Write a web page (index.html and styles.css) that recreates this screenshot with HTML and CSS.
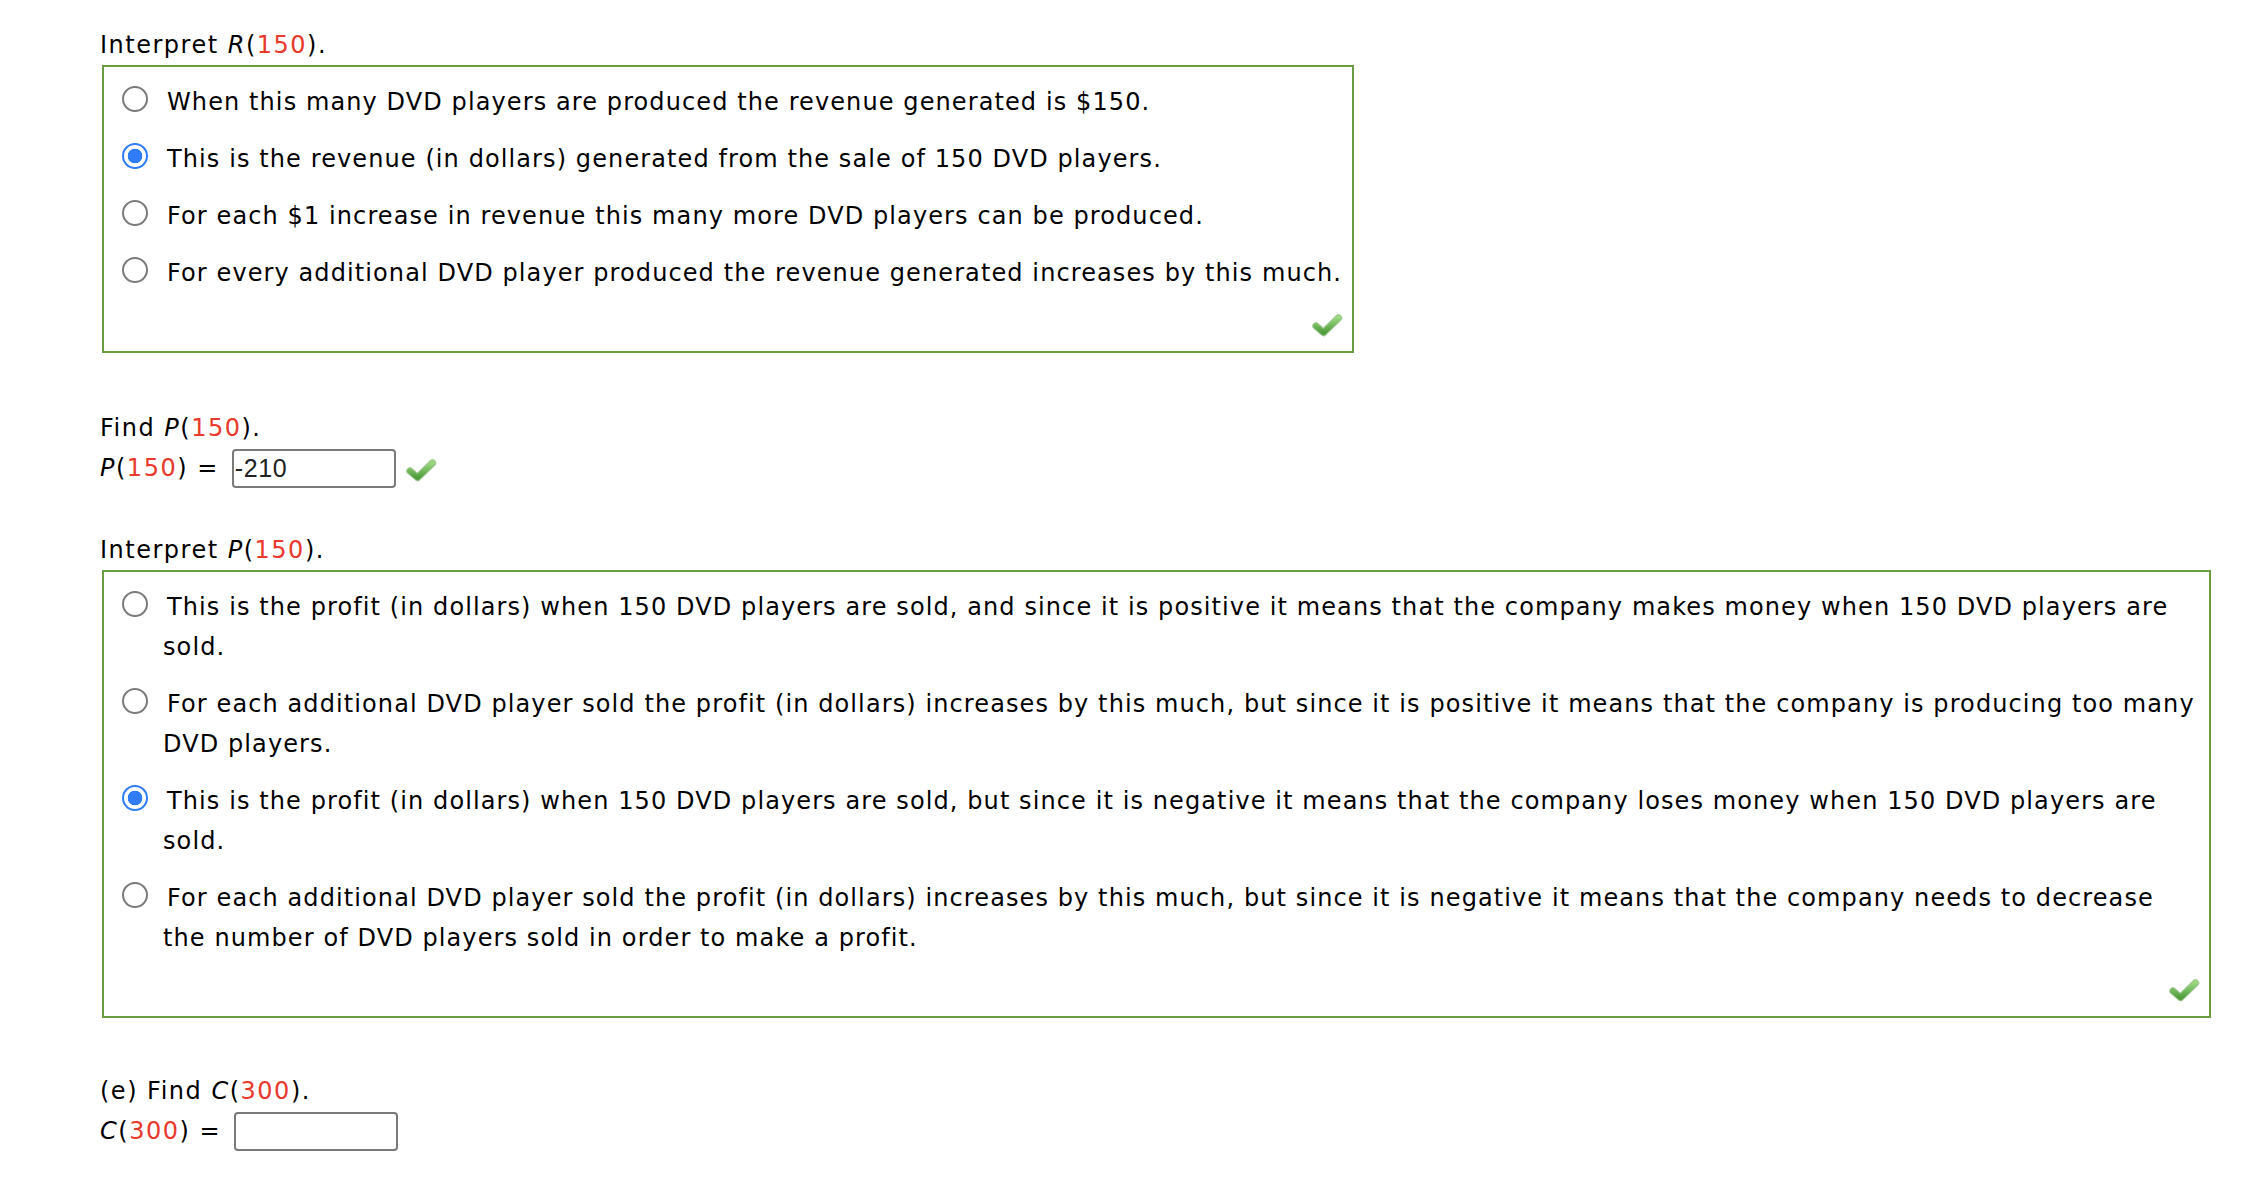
FILE: index.html
```html
<!DOCTYPE html>
<html lang="en">
<head>
<meta charset="utf-8">
<title>Interpret R(150)</title>
<link rel="stylesheet" href="styles.css">
</head>
<body>
<svg width="0" height="0" class="defs" aria-hidden="true">
  <defs>
    <linearGradient id="chk" x1="0" y1="0" x2="0" y2="1">
      <stop offset="0" stop-color="#9ad67f"/>
      <stop offset="1" stop-color="#4f9d3c"/>
    </linearGradient>
  </defs>
</svg>
<div class="page">
  <p class="prompt">Interpret <i>R</i>(<span class="red">150</span>).</p>
  <div class="choices box-r">
    <div class="choice"><span class="radio"></span><span class="text">When this many DVD players are produced the revenue generated is $150.</span></div>
    <div class="choice"><span class="radio checked"></span><span class="text">This is the revenue (in dollars) generated from the sale of 150 DVD players.</span></div>
    <div class="choice"><span class="radio"></span><span class="text">For each $1 increase in revenue this many more DVD players can be produced.</span></div>
    <div class="choice"><span class="radio"></span><span class="text">For every additional DVD player produced the revenue generated increases by this much.</span></div>
    <div class="mark-row">
      <svg class="check" viewBox="0 0 32 24"><path class="check-edge" d="M5 13 L12.5 19.5 L27.5 5"/><path class="check-fill" d="M5 13 L12.5 19.5 L27.5 5"/></svg>
    </div>
  </div>

  <p class="prompt find">Find <i>P</i>(<span class="red">150</span>).</p>
  <div class="answer-row">
    <span class="label"><i>P</i>(<span class="red">150</span>) =</span>
    <span class="field">-210</span>
    <svg class="check small" viewBox="0 0 32 24"><path class="check-edge" d="M5 13 L12.5 19.5 L27.5 5"/><path class="check-fill" d="M5 13 L12.5 19.5 L27.5 5"/></svg>
  </div>

  <p class="prompt interp">Interpret <i>P</i>(<span class="red">150</span>).</p>
  <div class="choices box-p">
    <div class="choice"><span class="radio"></span><span class="text">This is the profit (in dollars) when 150 DVD players are sold, and since it is positive it means that the company makes money when 150 DVD players are sold.</span></div>
    <div class="choice"><span class="radio"></span><span class="text">For each additional DVD player sold the profit (in dollars) increases by this much, but since it is positive it means that the company is producing too many DVD players.</span></div>
    <div class="choice"><span class="radio checked"></span><span class="text">This is the profit (in dollars) when 150 DVD players are sold, but since it is negative it means that the company loses money when 150 DVD players are sold.</span></div>
    <div class="choice"><span class="radio"></span><span class="text">For each additional DVD player sold the profit (in dollars) increases by this much, but since it is negative it means that the company needs to decrease the number of DVD players sold in order to make a profit.</span></div>
    <div class="mark-row">
      <svg class="check" viewBox="0 0 32 24"><path class="check-edge" d="M5 13 L12.5 19.5 L27.5 5"/><path class="check-fill" d="M5 13 L12.5 19.5 L27.5 5"/></svg>
    </div>
  </div>

  <p class="prompt find-c">(e) Find <i>C</i>(<span class="red">300</span>).</p>
  <div class="answer-row">
    <span class="label"><i>C</i>(<span class="red">300</span>) =</span>
    <span class="field empty"></span>
  </div>
</div>
</body>
</html>
```

FILE: styles.css
```css
html, body {
  margin: 0;
  padding: 0;
  background: #ffffff;
}

.defs {
  position: absolute;
  width: 0;
  height: 0;
}

.page {
  padding: 25px 0 0 100px;
  font-family: "DejaVu Sans", Verdana, sans-serif;
  font-size: 24px;
  line-height: 40px;
  letter-spacing: 1.1px;
  color: #000000;
}

.prompt {
  margin: 0;
  letter-spacing: 1.5px;
}

.red {
  color: #e8392c;
}

i {
  font-style: italic;
}

.choices {
  box-sizing: border-box;
  margin-left: 2px;
  border: 2px solid #6b9c40;
  padding: 15px 0 6px 0;
  display: flex;
  flex-direction: column;
  gap: 17px;
}

.box-r {
  width: 1252px;
}

.box-p {
  width: 2109px;
}

.choice {
  display: flex;
  align-items: flex-start;
}

.radio {
  flex: none;
  box-sizing: border-box;
  width: 26px;
  height: 26px;
  margin: 4px 0 0 18px;
  border: 2px solid #7b7b7b;
  border-radius: 50%;
  background: #ffffff;
}

.radio.checked {
  border: 2px solid #2f7cf6;
  background: radial-gradient(circle, #2f7cf6 0 7px, #ffffff 7.6px);
}

.text {
  margin-left: 15px;
  text-indent: 4px;
  padding-right: 2px;
}

.box-p .text {
  padding-right: 12px;
}

.mark-row {
  display: flex;
  justify-content: flex-end;
  align-items: center;
  height: 40px;
  margin-top: -5px;
  padding-right: 9px;
}

.check {
  width: 32px;
  height: 24px;
  display: block;
}

.check-edge {
  fill: none;
  stroke: #5b9e48;
  stroke-width: 7.5;
  stroke-linecap: round;
  stroke-linejoin: round;
  opacity: 0.55;
}

.check-fill {
  fill: none;
  stroke: url(#chk);
  stroke-width: 5.5;
  stroke-linecap: round;
  stroke-linejoin: round;
}

.find {
  margin-top: 55px;
}

.answer-row {
  display: flex;
  align-items: center;
  height: 40px;
}

.label {
  letter-spacing: 1.5px;
}

.field {
  box-sizing: border-box;
  width: 164px;
  height: 39px;
  margin-left: 13px;
  border: 2px solid #7a7a7a;
  border-radius: 4px;
  padding: 0 0 0 1px;
  font-family: "Liberation Sans", Arial, sans-serif;
  font-size: 25px;
  letter-spacing: 0.6px;
  line-height: 35px;
  color: #222222;
}

.answer-row .check.small {
  margin: 4px 0 0 9px;
}

.interp {
  margin-top: 42px;
}

.find-c {
  margin-top: 53px;
}
```
